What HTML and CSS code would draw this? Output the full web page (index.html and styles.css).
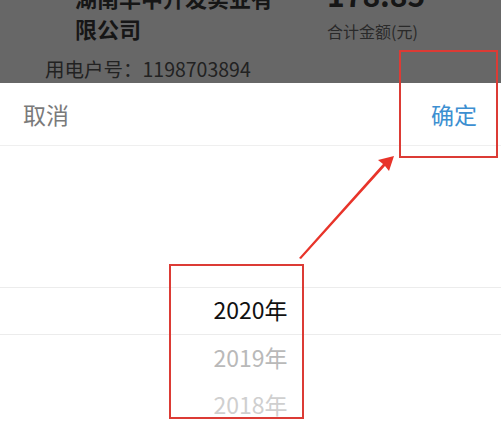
FILE: index.html
```html
<!DOCTYPE html>
<html lang="zh-CN">
<head>
    <meta charset="UTF-8">
    <meta name="viewport" content="width=device-width, initial-scale=1.0">
    <title>选择年份</title>
    <link rel="stylesheet" href="styles.css">
</head>
<body>
    <div class="bill">
        <div class="bill-left">
            <div class="company">
                <span>湖南华中升发实业有</span>
                <span>限公司</span>
            </div>
            <p class="account">用电户号：1198703894</p>
        </div>
        <div class="bill-right">
            <p class="amount">178.85</p>
            <p class="amount-label">合计金额(元)</p>
        </div>
    </div>

    <div class="sheet">
        <div class="sheet-head">
            <a class="cancel">取消</a>
            <a class="confirm">确定</a>
        </div>
        <div class="picker">
            <div class="picker-empty"></div>
            <div class="picker-row selected">2020年</div>
            <div class="picker-row near">2019年</div>
            <div class="picker-row far">2018年</div>
        </div>
    </div>

    <!-- annotation marks -->
    <div class="mark mark-confirm"></div>
    <div class="mark mark-year"></div>
    <svg class="arrow" width="501" height="422" viewBox="0 0 501 422">
        <polygon points="299,258 383,164 378,160 394,156 389,171 385,166 301,259" fill="#e8342a"/>
    </svg>
</body>
</html>
```

FILE: styles.css
```css
body {
    margin: 0;
    width: 501px;
    height: 422px;
    overflow: hidden;
    font-family: "Noto Sans CJK SC", "Noto Sans", sans-serif;
    position: relative;
    background: #fff;
}

p {
    margin: 0;
}

/* page behind the mask */
.bill {
    height: 83px;
    background: #676767;
    display: flex;
    overflow: hidden;
}

.bill-left {
    width: 282px;
    padding-left: 45px;
    margin-top: -18px;
}

.company {
    margin-left: 30px;
    font-size: 22px;
    font-weight: bold;
    line-height: 31px;
    color: #161616;
}

.company span {
    display: block;
    white-space: nowrap;
}

.account {
    margin-top: 12px;
    font-size: 19.5px;
    line-height: 26px;
    color: #222;
    white-space: nowrap;
}

.bill-right {
    margin-top: -24px;
    width: 88px;
    text-align: right;
}

.amount {
    font-size: 30px;
    font-weight: bold;
    line-height: 36px;
    color: #161616;
}

.amount-label {
    margin-top: 8px;
    font-size: 16px;
    line-height: 22px;
    color: #2a2a2a;
    white-space: nowrap;
}

/* bottom sheet */
.sheet {
    background: #fff;
}

.sheet-head {
    height: 62px;
    display: flex;
    justify-content: space-between;
    align-items: center;
    padding: 0 24px 0 23px;
    border-bottom: 1px solid #efefef;
    font-size: 23px;
}

.cancel {
    color: #7a7a7a;
}

.confirm {
    color: #3d8fd1;
}

.picker-empty {
    height: 141px;
}

.picker-row {
    height: 47px;
    box-sizing: border-box;
    padding-bottom: 4px;
    display: flex;
    align-items: center;
    justify-content: center;
    font-size: 23px;
}

.picker-row.selected {
    height: 48px;
    border-top: 1px solid #ececec;
    border-bottom: 1px solid #ececec;
    color: #111;
}

.picker-row.near {
    color: #b9b9b9;
}

.picker-row.far {
    color: #cfcfcf;
}

.mark {
    position: absolute;
    border: 2px solid #dc3b35;
    box-sizing: border-box;
}

.mark-confirm {
    left: 399px;
    top: 50px;
    width: 99px;
    height: 108px;
}

.mark-year {
    left: 169px;
    top: 264px;
    width: 135px;
    height: 155px;
}

.arrow {
    position: absolute;
    left: 0;
    top: 0;
}
```
